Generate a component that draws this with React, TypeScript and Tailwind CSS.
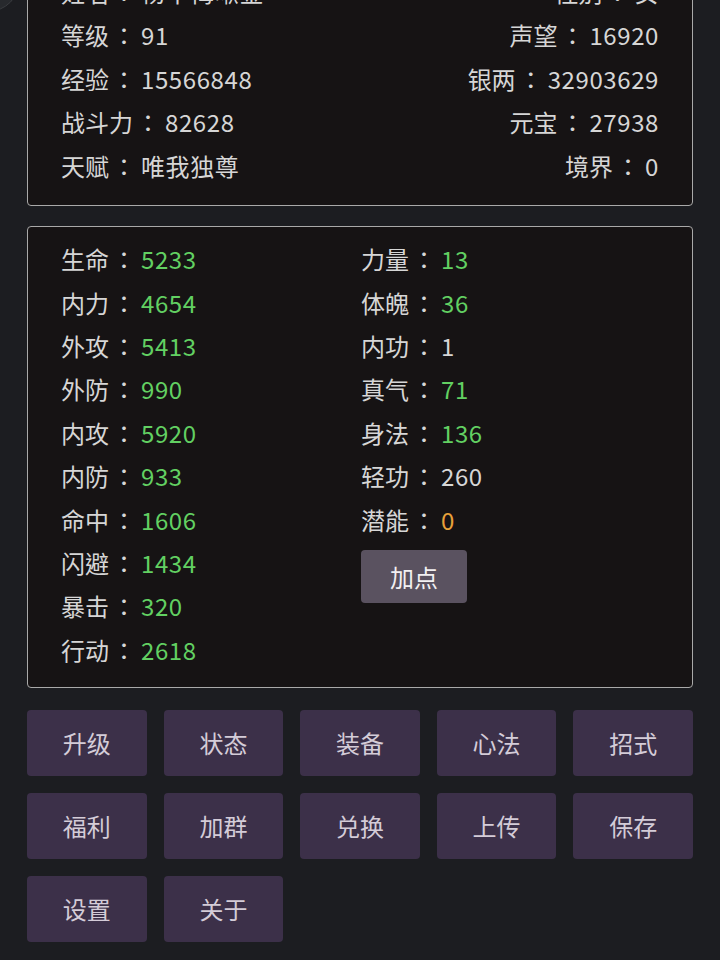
import React from "react";

const font = "font-['Noto_Sans_CJK_TC','Noto_Sans_CJK_SC',sans-serif]";

const topRows: [[string, string], [string, string]][] = [
  [["姓名", "杨不悔啾金"], ["性别", "女"]],
  [["等级", "91"], ["声望", "16920"]],
  [["经验", "15566848"], ["银两", "32903629"]],
  [["战斗力", "82628"], ["元宝", "27938"]],
  [["天赋", "唯我独尊"], ["境界", "0"]],
];

const leftStats: [string, string][] = [
  ["生命", "5233"],
  ["内力", "4654"],
  ["外攻", "5413"],
  ["外防", "990"],
  ["内攻", "5920"],
  ["内防", "933"],
  ["命中", "1606"],
  ["闪避", "1434"],
  ["暴击", "320"],
  ["行动", "2618"],
];

const rightStats: [string, string, string][] = [
  ["力量", "13", "text-[#62d062]"],
  ["体魄", "36", "text-[#62d062]"],
  ["内功", "1", "text-[#d6d6d6]"],
  ["真气", "71", "text-[#62d062]"],
  ["身法", "136", "text-[#62d062]"],
  ["轻功", "260", "text-[#d6d6d6]"],
  ["潜能", "0", "text-[#e8a13a]"],
];

const buttons = ["升级", "状态", "装备", "心法", "招式", "福利", "加群", "兑换", "上传", "保存", "设置", "关于"];

function Item({ k, v, c = "" }: { k: string; v: string; c?: string }) {
  return (
    <span className="flex items-center">
      <span>{k}</span>
      <span className="ml-[3px] mr-[5px]">：</span>
      <span className={`tracking-[0.6px] ${c}`}>{v}</span>
    </span>
  );
}

export default function App() {
  return (
    <div className={`relative w-[720px] h-[960px] overflow-hidden bg-[#1c1d21] ${font} text-[24px] text-[#d6d6d6]`}>
      <div className="absolute left-[-44px] top-[-52px] w-[64px] h-[64px] rounded-full bg-[#27292d] border border-[#3a3c40]" />
      <div className="px-[27px] flex flex-col">
        <div className="mt-[-43px] border border-[#a9a9a9] rounded-[4px] bg-[#161314] pt-3 pb-[17px] pl-[33px] pr-[33px]">
          {topRows.map(([l, r], i) => (
            <div key={i} className="h-[43.5px] flex items-center justify-between leading-none">
              <Item k={l[0]} v={l[1]} />
              <Item k={r[0]} v={r[1]} />
            </div>
          ))}
        </div>

        <div className="mt-[20px] border border-[#a9a9a9] rounded-[4px] bg-[#161314] pt-[11px] pb-[16px] pl-[33px] flex">
          <div className="w-[300px] flex flex-col">
            {leftStats.map(([k, v]) => (
              <div key={k} className="h-[43.4px] flex items-center leading-none">
                <Item k={k} v={v} c="text-[#62d062]" />
              </div>
            ))}
          </div>
          <div className="flex flex-col">
            {rightStats.map(([k, v, c]) => (
              <div key={k} className="h-[43.4px] flex items-center leading-none">
                <Item k={k} v={v} c={c} />
              </div>
            ))}
            <button className="mt-[9px] w-[106px] h-[53px] rounded-[4px] bg-[#5a5260] text-[#f2f0f2] flex items-center justify-center leading-none">
              加点
            </button>
          </div>
        </div>

        <div className="mt-[22px] grid grid-cols-5 gap-x-[17px] gap-y-[17px]">
          {buttons.map((b) => (
            <button
              key={b}
              className="h-[66px] rounded-[4px] bg-[#3c3049] text-[#d4ccd8] flex items-center justify-center leading-none"
            >
              {b}
            </button>
          ))}
        </div>
      </div>
    </div>
  );
}
